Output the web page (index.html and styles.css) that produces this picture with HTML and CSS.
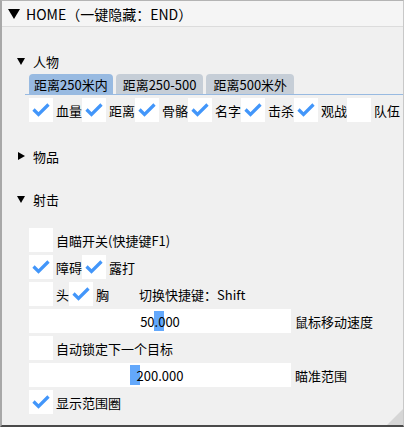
FILE: index.html
```html
<!DOCTYPE html>
<html lang="zh">
<head>
    <meta charset="UTF-8">
    <title>HOME</title>
    <link rel="stylesheet" href="styles.css">
</head>
<body>
    <div class="window">
        <div class="titlebar">
            <svg class="arrow-big" width="12" height="12" viewBox="0 0 12 12"><polygon points="0,1 12,1 6,11" fill="#000"/></svg>
            <span>HOME（一键隐藏：END）</span>
        </div>

        <div class="content">
            <div class="header first">
                <svg class="arrow" width="8" height="8" viewBox="0 0 8 8"><polygon points="0,1 8,1 4,8" fill="#000"/></svg>
                <span>人物</span>
            </div>

            <div class="tabbar">
                <div class="tab active">距离250米内</div>
                <div class="tab">距离250-500</div>
                <div class="tab">距离500米外</div>
            </div>

            <div class="row">
                <span class="check on"></span><span class="label">血量</span>
                <span class="check on"></span><span class="label">距离</span>
                <span class="check on"></span><span class="label">骨骼</span>
                <span class="check on"></span><span class="label">名字</span>
                <span class="check on"></span><span class="label">击杀</span>
                <span class="check on"></span><span class="label">观战</span>
                <span class="check"></span><span class="label">队伍</span>
            </div>

            <div class="header closed">
                <svg class="arrow" width="8" height="8" viewBox="0 0 8 8"><polygon points="1,0 8,4 1,8" fill="#000"/></svg>
                <span>物品</span>
            </div>

            <div class="header open2">
                <svg class="arrow" width="8" height="8" viewBox="0 0 8 8"><polygon points="0,1 8,1 4,8" fill="#000"/></svg>
                <span>射击</span>
            </div>

            <div class="rows">
                <div class="row">
                    <span class="check"></span><span class="label">自瞄开关(快捷键F1)</span>
                </div>
                <div class="row">
                    <span class="check on"></span><span class="label">障碍</span>
                    <span class="check on"></span><span class="label">露打</span>
                </div>
                <div class="row">
                    <span class="check"></span><span class="label">头</span>
                    <span class="check on"></span><span class="label">胸</span>
                    <span class="hotkey">切换快捷键：Shift</span>
                </div>
                <div class="row">
                    <div class="slider">
                        <span class="grab" style="left:125px"></span>
                        <span class="value">50.000</span>
                    </div>
                    <span class="slider-label">鼠标移动速度</span>
                </div>
                <div class="row">
                    <span class="check"></span><span class="label">自动锁定下一个目标</span>
                </div>
                <div class="row">
                    <div class="slider">
                        <span class="grab" style="left:101px"></span>
                        <span class="value">200.000</span>
                    </div>
                    <span class="slider-label">瞄准范围</span>
                </div>
                <div class="row">
                    <span class="check on"></span><span class="label">显示范围圈</span>
                </div>
            </div>
        </div>
        <div class="grip"></div>
    </div>
</body>
</html>
```

FILE: styles.css
```css
* { box-sizing: border-box; }
body {
    margin: 0;
    font-family: 'Noto Sans CJK SC', 'Noto Sans', sans-serif;
    font-size: 13px;
    color: #000;
    background: #f0f0f0;
}
.window {
    position: relative;
    width: 404px;
    height: 427px;
    background: #f0f0f0;
    border-left: 2px solid #a8a8a8;
    border-top: 1px solid #b4b4b4;
    border-right: 1px solid #c8c8c8;
    border-bottom: 2px solid #4a4a4a;
    overflow: hidden;
}
.titlebar {
    height: 26px;
    display: flex;
    align-items: center;
    padding-left: 6px;
    background: #f5f5f5;
    border-bottom: 1px solid #dcdcdc;
    font-size: 14px;
    white-space: nowrap;
}
.arrow-big { margin-right: 6px; }
.content { padding-left: 15px; }
.header {
    height: 20px;
    display: flex;
    align-items: center;
    white-space: nowrap;
}
.header .arrow { margin-right: 8px; }
.header.first { margin-top: 24px; }
.header.closed { margin-top: 24px; }
.header.open2 { margin-top: 23px; }
.tabbar {
    display: flex;
    gap: 3px;
    margin-top: 3px;
    margin-left: 8px;
    padding-left: 4px;
    height: 21px;
    border-bottom: 1px solid #98bae1;
}
.tab {
    height: 20px;
    padding: 0 7px;
    display: flex;
    align-items: center;
    background: #c6ced7;
    border-radius: 4px 4px 0 0;
    white-space: nowrap;
}
.tab.active { background: #98bae1; padding: 0 5px; }
.row {
    display: flex;
    align-items: center;
    height: 24px;
    margin-top: 3px;
    margin-left: 12px;
    white-space: nowrap;
}
.rows { margin-top: 19px; }
.check {
    flex: none;
    width: 24px;
    height: 24px;
    background: #fff;
    margin-right: 3px;
}
.check.on {
    background: #fff url("data:image/svg+xml,%3Csvg xmlns='http://www.w3.org/2000/svg' width='24' height='24'%3E%3Cpolyline points='4.5,11.5 9.5,16.5 19.5,6.5' fill='none' stroke='%234296fa' stroke-width='3.2'/%3E%3C/svg%3E") no-repeat;
}
.label { flex: none; }
.hotkey { margin-left: 30px; }
.slider {
    position: relative;
    width: 262px;
    height: 24px;
    background: #fff;
    display: flex;
    align-items: center;
    justify-content: center;
}
.grab {
    position: absolute;
    top: 2px;
    width: 10px;
    height: 20px;
    background: #63a8fb;
}
.value { position: relative; }
.slider-label { margin-left: 4px; }
.grip {
    position: absolute;
    right: 0;
    bottom: 0;
    width: 0;
    height: 0;
    border-left: 16px solid transparent;
    border-bottom: 16px solid #d6d6d6;
}
```
